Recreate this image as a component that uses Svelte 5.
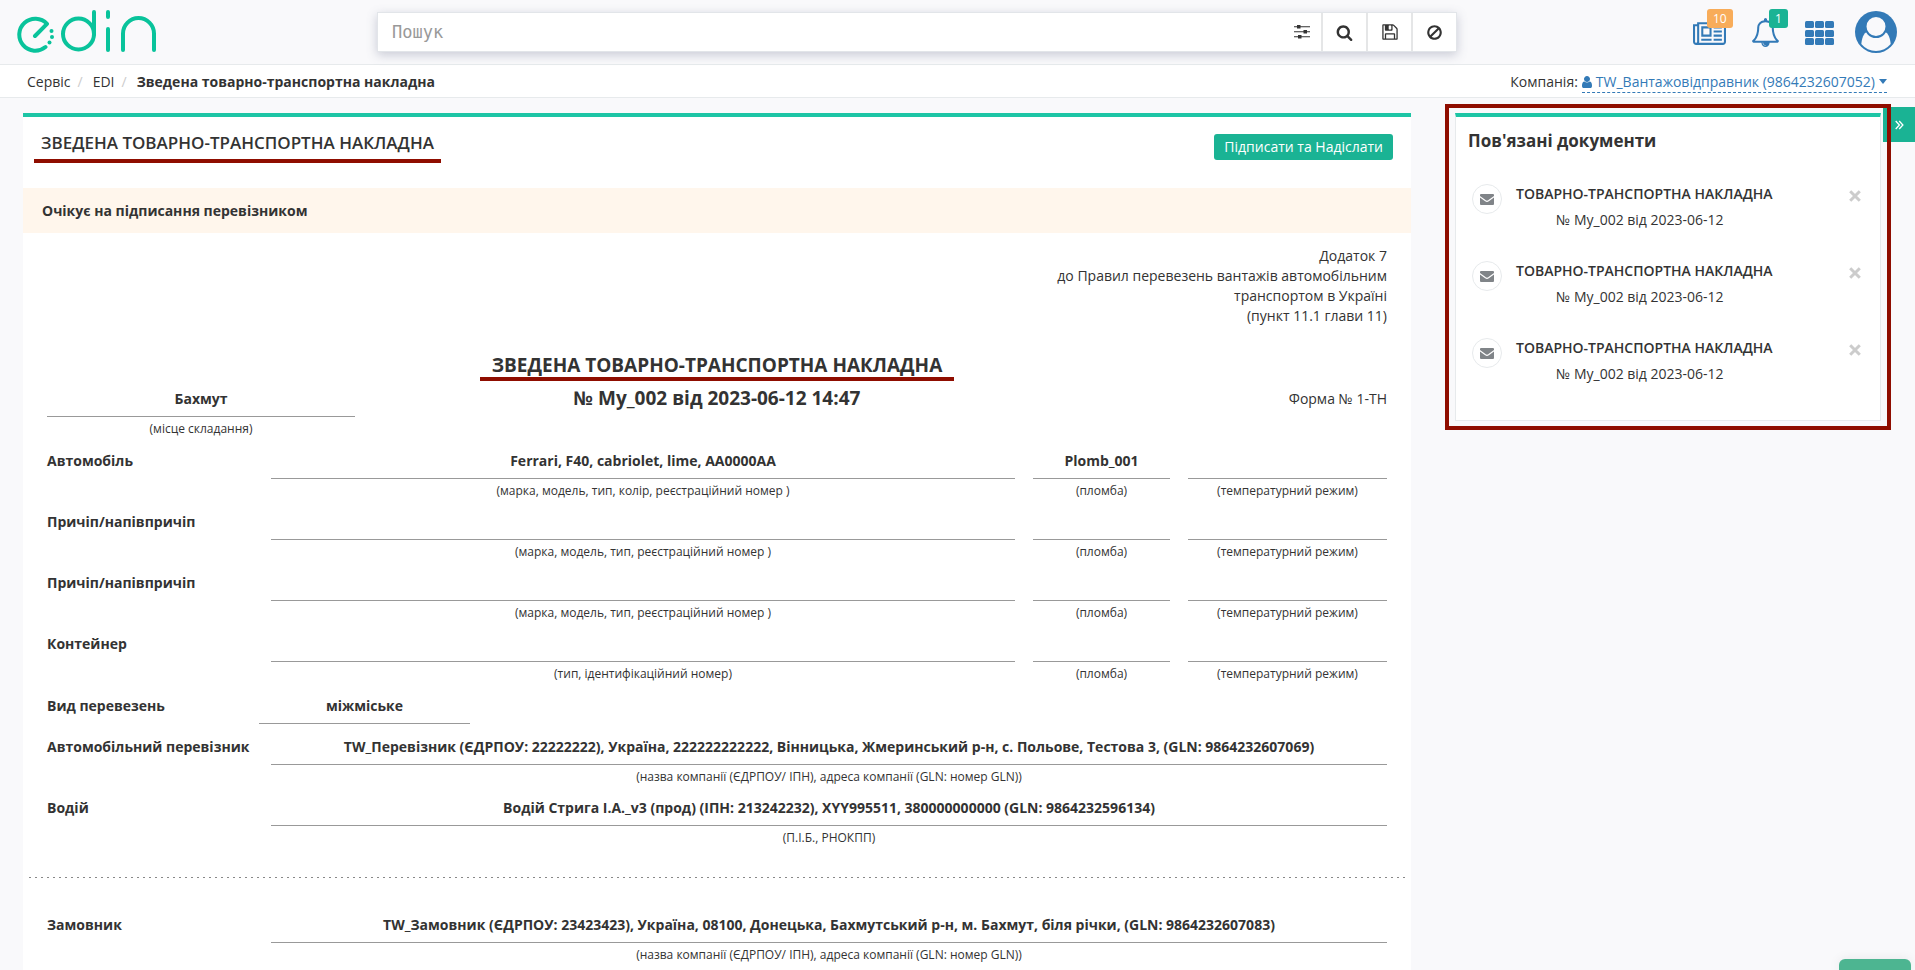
<script>
  const vehicles = [
    { label: 'Автомобіль', value: 'Ferrari, F40, cabriolet, lime, AA0000AA', hint: '(марка, модель, тип, колір, реєстраційний номер )', seal: 'Plomb_001' },
    { label: 'Причіп/напівпричіп', value: '', hint: '(марка, модель, тип, реєстраційний номер )', seal: '' },
    { label: 'Причіп/напівпричіп', value: '', hint: '(марка, модель, тип, реєстраційний номер )', seal: '' },
    { label: 'Контейнер', value: '', hint: '(тип, ідентифікаційний номер)', seal: '' }
  ];

  const companyHint = '(назва компанії (ЄДРПОУ/ ІПН), адреса компанії (GLN: номер GLN))';
  const carriers = [
    { label: 'Автомобільний перевізник', value: 'TW_Перевізник (ЄДРПОУ: 22222222), Україна, 222222222222, Вінницька, Жмеринський р-н, с. Польове, Тестова 3, (GLN: 9864232607069)', hint: companyHint },
    { label: 'Водій', value: 'Водій Стрига І.А._v3 (прод) (ІПН: 213242232), XYY995511, 380000000000 (GLN: 9864232596134)', hint: '(П.І.Б., РНОКПП)' }
  ];
  const customers = [
    { label: 'Замовник', value: 'TW_Замовник (ЄДРПОУ: 23423423), Україна, 08100, Донецька, Бахмутський р-н, м. Бахмут, біля річки, (GLN: 9864232607083)', hint: companyHint }
  ];

  const related = [1, 2, 3].map((id) => ({
    id,
    type: 'ТОВАРНО-ТРАНСПОРТНА НАКЛАДНА',
    name: '№ My_002 від 2023-06-12'
  }));
</script>

{#snippet field(value, hint)}
  <div class="field">
    <div class="value">{value}</div>
    {#if hint}<div class="hint">{hint}</div>{/if}
  </div>
{/snippet}

<div class="page">
  <header class="top">
    <a class="logo" href="#home" aria-label="edin">
      <svg width="144" height="46" viewBox="0 0 144 46" fill="none" stroke="#09c39b" stroke-width="4" stroke-linecap="round">
        <path d="M18 29 30 16.800A16 16 0 1 0 28.500 40" stroke-linejoin="round" />
        <g fill="#09c39b" stroke="none">
          <circle cx="34.500" cy="24" r="2" /><circle cx="35" cy="30" r="2" /><circle cx="32.500" cy="35.500" r="2" />
        </g>
        <circle cx="61.500" cy="27" r="15.500" />
        <path d="M77 5V27.500M91 5v5M91 22v21M106 43V26.500a15.500 15.500 0 0 1 31 0v16.500" />
      </svg>
    </a>

    <form class="search" role="search">
      <input type="text" placeholder="Пошук" aria-label="Пошук" />
      <button type="button" class="plain" aria-label="Фільтри">
        <svg width="16" height="14" viewBox="0 0 16 14" fill="#333"><path d="M0 1.300h16v1H0zM0 6.300h16v1H0zM0 11.300h16v1H0z" /><path d="M3 0h3.500v3.600H3zM9.500 5H13v3.600H9.500zM4 10h3.500v3.600H4z" /></svg>
      </button>
      <button type="button" aria-label="Шукати">
        <svg width="17" height="17" viewBox="0 0 1792 1792" fill="#333"><path d="M1216 832q0-185-131.500-316.500t-316.500-131.500-316.500 131.500-131.500 316.500 131.500 316.500 316.500 131.500 316.500-131.500 131.500-316.500zm512 832q0 52-38 90t-90 38q-54 0-90-38l-343-342q-179 124-399 124-143 0-273.500-55.500t-225-150-150-225-55.500-273.500 55.500-273.500 150-225 225-150 273.500-55.500 273.500 55.500 225 150 150 225 55.500 273.500q0 220-124 399l343 343q37 37 37 90z" /></svg>
      </button>
      <button type="button" aria-label="Зберегти">
        <svg width="18" height="18" viewBox="0 0 1792 1792" fill="#333"><path d="M512 1536h768v-384h-768v384zm896 0h128v-896q0-14-10-38.500t-20-34.500l-281-281q-10-10-34-20t-39-10v416q0 40-28 68t-68 28h-576q-40 0-68-28t-28-68v-416h-128v1280h128v-416q0-40 28-68t68-28h832q40 0 68 28t28 68v416zm-384-928v-320q0-13-9.500-22.500t-22.500-9.500h-192q-13 0-22.500 9.500t-9.500 22.500v320q0 13 9.500 22.500t22.500 9.500h192q13 0 22.500-9.500t9.500-22.500zm640 32v928q0 40-28 68t-68 28h-1344q-40 0-68-28t-28-68v-1344q0-40 28-68t68-28h928q40 0 88 20t76 48l280 280q28 28 48 76t20 88z" /></svg>
      </button>
      <button type="button" aria-label="Очистити">
        <svg width="17" height="17" viewBox="0 0 1792 1792" fill="#333"><path d="M1440 893q0-161-87-295l-754 753q137 89 297 89 111 0 211.500-43.500t173.500-116.500 116-174.500 43-212.500zm-999 299l755-754q-135-91-300-91-148 0-273 73t-198 199-73 274q0 162 89 299zm1223-299q0 157-61 300t-163.500 246-245 164-298.500 61-298.500-61-245-164-163.500-246-61-300 61-299.500 163.500-245.500 245-164 298.500-61 298.500 61 245 164 163.500 245.500 61 299.500z" /></svg>
      </button>
    </form>

    <nav class="tools">
      <a class="tool" href="#news" aria-label="Новини">
        <svg width="33" height="29" viewBox="0 0 2048 1792" fill="#337ab7"><path d="M1024 1024h-384v-384h384v384zm128 384v-128h-640v128h640zm0-384v-512h-640v640h640v-128zm640 384v-128h-512v128h512zm0-256v-128h-512v128h512zm0-256v-128h-512v128h512zm0-256v-128h-512v128h512zM256 1472v-960h-128v960q0 26 19 45t45 19 45-19 19-45zm1664 0v-1088h-1536v1088q0 33-11 64h1483q26 0 45-19t19-45zm128-1216v1216q0 80-56 136t-136 56h-1664q-80 0-136-56t-56-136v-1088h256v-128h1792z" fill-rule="evenodd" /></svg>
        <span class="badge orange">10</span>
      </a>
      <a class="tool" href="#alerts" aria-label="Сповіщення">
        <svg width="29" height="29" viewBox="0 0 1792 1792" fill="#337ab7"><path d="M912 1696q0-16-16-16-59 0-101.500-42.500t-42.500-101.500q0-16-16-16t-16 16q0 73 51.500 124.500t124.500 51.500q16 0 16-16zm-666-288h1300q-266-300-266-832 0-51-24-105t-69-103-121.500-80.500-169.500-31.500-169.500 31.500-121.500 80.500-69 103-24 105q0 532-266 832zm1482 0q0 52-38 90t-90 38h-448q0 106-75 181t-181 75-181-75-75-181h-448q-52 0-90-38t-38-90q50-42 91-88t85-119.500 74.500-158.500 50-206 19.500-260q0-152 117-282.500t307-158.500q-8-19-8-39 0-40 28-68t68-28 68 28 28 68q0 20-8 39 190 28 307 158.500t117 282.500q0 139 19.500 260t50 206 74.500 158.500 85 119.500 91 88z" /></svg>
        <span class="badge green">1</span>
      </a>
      <a class="tool" href="#apps" aria-label="Сервіси">
        <svg width="29" height="29" viewBox="0 0 29 29" fill="#337ab7">
          {#each [3, 12, 20] as y}{#each [0, 10, 20] as x}<rect {x} {y} width="9" height="7" rx="1.500" />{/each}{/each}
        </svg>
      </a>
      <a class="tool" href="#profile" aria-label="Профіль">
        <svg width="42" height="42" viewBox="0 0 42 42">
          <circle cx="21" cy="21" r="21" fill="#337ab7" />
          <path d="M6.300 33C7 25 10 20.500 14 20.500h14c4 0 7 4.500 7.700 12.500A19 19 0 0 1 6.300 33z" fill="#f9f9fb" />
          <circle cx="21" cy="15.500" r="10.500" fill="#f9f9fb" stroke="#337ab7" stroke-width="2" />
        </svg>
      </a>
    </nav>
  </header>

  <div class="subbar">
    <nav class="crumbs" aria-label="Навігація">
      <a href="#service">Сервіс</a><span class="sep">/</span><a href="#edi">EDI</a><span class="sep">/</span><strong>Зведена товарно-транспортна накладна</strong>
    </nav>
    <div class="company">
      <span>Компанія:</span>
      <a href="#company">
        <svg width="14" height="14" viewBox="256 0 1280 1792" fill="#337ab7"><path d="M1536 1399q0 109-62.500 187t-150.500 78h-854q-88 0-150.500-78t-62.500-187q0-85 8.500-160.500t31.500-152 58.500-131 94-89 134.500-34.500q131 128 313 128t313-128q76 0 134.500 34.500t94 89 58.500 131 31.500 152 8.500 160.500zm-256-887q0 159-112.500 271.500t-271.500 112.500-271.500-112.500-112.500-271.500 112.500-271.500 271.500-112.500 271.500 112.500 112.500 271.500z" /></svg>
        <span>TW_Вантажовідправник (9864232607052)</span>
        <i class="caret"></i>
      </a>
    </div>
  </div>

  <div class="body">
    <main class="card">
      <div class="card-head">
        <h1>ЗВЕДЕНА ТОВАРНО-ТРАНСПОРТНА НАКЛАДНА</h1>
        <button type="button" class="primary">Підписати та Надіслати</button>
      </div>
      <div class="status">Очікує на підписання перевізником</div>

      <div class="doc">
        <p class="annex">Додаток 7<br />до Правил перевезень вантажів автомобільним<br />транспортом в Україні<br />(пункт 11.1 глави 11)</p>

        <div class="doc-head">
          <div class="place">{@render field('Бахмут', '(місце складання)')}</div>
          <h2><span class="marked">ЗВЕДЕНА ТОВАРНО-ТРАНСПОРТНА НАКЛАДНА</span><span>№ My_002 від 2023-06-12 14:47</span></h2>
          <div class="form-no">Форма № 1-ТН</div>
        </div>

        {#each vehicles as v}
          <div class="row">
            <div class="label">{v.label}</div>
            {@render field(v.value, v.hint)}
            {@render field(v.seal, '(пломба)')}
            {@render field('', '(температурний режим)')}
          </div>
        {/each}
        <div class="row kind">
          <div class="label">Вид перевезень</div>
          {@render field('міжміське', '')}
        </div>
        {#each carriers as c}
          <div class="row wide">
            <div class="label">{c.label}</div>
            {@render field(c.value, c.hint)}
          </div>
        {/each}
        <div class="dots"></div>
        {#each customers as c}
          <div class="row wide">
            <div class="label">{c.label}</div>
            {@render field(c.value, c.hint)}
          </div>
        {/each}
      </div>
    </main>

    <aside class="frame">
      <section class="panel">
        <h3>Пов'язані документи</h3>
        <ul>
          {#each related as d (d.id)}
            <li>
              <span class="mail">
                <svg width="14" height="11" viewBox="0 0 14 11"><rect width="14" height="11" rx="1" fill="#808488" /><path d="M-.500 2.500 5.500 6.800q1.500 1 3 0L14.500 2.500" fill="none" stroke="#fff" stroke-width="1.200" /></svg>
              </span>
              <a href="#doc">
                <b>{d.type}</b>
                <span>{d.name}</span>
              </a>
              <button type="button" class="remove" aria-label="Видалити">
                <svg width="12" height="12" viewBox="0 0 12 12" stroke="#ccc" stroke-width="3"><path d="M1.200 1.200l9.600 9.600M10.800 1.200l-9.600 9.600" /></svg>
              </button>
            </li>
          {/each}
        </ul>
      </section>
    </aside>
    <button type="button" class="collapse" aria-label="Згорнути">
      <svg width="9" height="10" viewBox="0 0 9 10" fill="none" stroke="#fff" stroke-width="1.300"><path d="M.700 1l3.700 4-3.700 4M4.200 1l3.700 4-3.700 4" /></svg>
    </button>
  </div>

  <button type="button" class="chat" aria-label="Чат"></button>
</div>

<style>
  :global(body) {
    margin: 0;
    background: #f9f9fb;
  }
  .page {
    position: relative;
    height: 100vh;
    overflow: hidden;
    font-family: 'Open Sans', 'Noto Sans', sans-serif;
    font-size: 14px;
    line-height: 20px;
    color: #333;
  }
  .page * {
    box-sizing: border-box;
  }
  a {
    color: inherit;
    text-decoration: none;
  }
  button {
    font: inherit;
    border: 0;
    padding: 0;
    cursor: pointer;
  }
  svg {
    display: block;
    flex: none;
  }
  .top {
    display: grid;
    grid-template-columns: 360fr 1080fr 440fr;
    align-items: center;
    height: 65px;
    padding: 0 18px 0 17px;
    border-bottom: 1px solid #e7eaec;
  }
  .logo {
    justify-self: start;
    margin-top: -4px;
  }
  .search {
    display: flex;
    height: 40px;
    background: #fff;
    border: 1px solid #e2e5e9;
    box-shadow: 0 3px 10px rgba(90, 96, 130, 0.3);
  }
  .search input {
    flex: 1;
    min-width: 0;
    border: 0;
    padding: 0 14px;
    outline: none;
    background: none;
    font: 17px 'DejaVu Sans Mono', monospace;
    color: #333;
  }
  .search input::placeholder {
    color: #999;
    opacity: 1;
  }
  .search button {
    display: grid;
    place-items: center;
    width: 45px;
    background: #fff;
    border-left: 2px solid #e5e6e7;
  }
  .search button.plain {
    width: 38px;
    border: 0;
  }
  .tools {
    display: flex;
    justify-content: flex-end;
    align-items: center;
    gap: 25px;
  }
  .tool {
    position: relative;
  }
  .tool:last-child {
    margin-left: -4px;
  }
  .badge {
    position: absolute;
    top: -9px;
    left: 14px;
    height: 19px;
    padding: 0 6px;
    border-radius: 3px;
    color: #fff;
    font-size: 12px;
    line-height: 19px;
  }
  .orange {
    background: #f8ac59;
  }
  .green {
    left: 18px;
    background: #1ab394;
  }
  .subbar {
    display: flex;
    justify-content: space-between;
    align-items: center;
    height: 33px;
    padding: 2px 28px 0 27px;
    background: #fff;
    border-bottom: 1px solid #e7eaec;
  }
  .sep {
    padding: 0 10px 0 7px;
    color: #ccc;
  }
  .company,
  .company a {
    display: flex;
    align-items: center;
    gap: 4px;
  }
  .company a {
    color: #337ab7;
    border-bottom: 1px dashed #337ab7;
  }
  .company svg {
    width: 10px;
  }
  .caret {
    border: 4px solid transparent;
    border-top: 5px solid #337ab7;
    border-bottom: 0;
  }
  .body {
    position: relative;
    display: grid;
    grid-template-columns: 1388fr 446fr;
    gap: 34px;
    align-items: start;
    padding: 15px 24px 0 23px;
  }
  .card {
    background: #fff;
    border-top: 4px solid #1dc5a5;
  }
  .card-head {
    display: flex;
    justify-content: space-between;
    align-items: flex-start;
    height: 71px;
    padding: 14px 18px 0 11px;
  }
  h1,
  h2,
  h3 {
    margin: 0;
  }
  h1 {
    padding: 0 7px 4px;
    border-bottom: 4px solid #8f0d00;
    font-size: 17px;
    font-weight: 600;
    line-height: 24px;
  }
  .primary {
    height: 26px;
    margin-top: 3px;
    padding: 0 10px;
    border-radius: 3px;
    background: #1ab394;
    color: #fff;
  }
  .status {
    padding: 0 19px;
    background: #fff6ec;
    font-weight: 700;
    line-height: 45px;
  }
  .doc {
    padding: 13px 24px 0;
  }
  .annex {
    margin: 0;
    text-align: right;
  }
  .doc-head {
    display: grid;
    grid-template-columns: 308fr 724fr 308fr;
    align-items: start;
    margin: 27px 0 13px;
  }
  .place,
  .form-no {
    padding-top: 36px;
  }
  .form-no {
    text-align: right;
  }
  h2 {
    display: flex;
    flex-direction: column;
    align-items: center;
    gap: 5px;
    font-size: 19px;
    font-weight: 700;
    line-height: 24px;
  }
  .marked {
    padding: 0 12px;
    border-bottom: 4px solid #8f0d00;
  }
  .row {
    display: grid;
    grid-template-columns: 206fr 744fr 137fr 199fr;
    gap: 18px;
    padding-bottom: 12px;
  }
  .row.wide {
    grid-template-columns: 206fr 1116fr;
  }
  .row.kind {
    grid-template-columns: 194fr 211fr 899fr;
    padding: 1px 0 13px;
  }
  .label {
    font-weight: 700;
    white-space: nowrap;
  }
  .field {
    min-width: 0;
    text-align: center;
  }
  .value {
    height: 28px;
    border-bottom: 1px solid #999;
    font-weight: 700;
    white-space: nowrap;
  }
  .hint {
    margin-top: 3px;
    font-size: 12px;
    line-height: 18px;
  }
  .dots {
    height: 1px;
    margin: 18px -18px 37px;
    background: repeating-linear-gradient(90deg, #888 0 2px, transparent 2px 6px);
  }
  .frame {
    position: relative;
    z-index: 1;
    margin-top: -9px;
    padding: 5px 6px;
    border: 4px solid #8f0d00;
  }
  .panel {
    padding: 12px 12px 36px;
    background: #fff;
    border: 1px solid #e7eaec;
    border-top: 4px solid #1dc5a5;
  }
  h3 {
    font-size: 17px;
    font-weight: 700;
    line-height: 24px;
  }
  ul {
    display: grid;
    gap: 31px;
    margin: 31px 0 0;
    padding: 0;
    list-style: none;
  }
  li {
    display: flex;
    align-items: flex-start;
    padding: 0 7px 0 4px;
  }
  li a {
    flex: 1;
    display: grid;
    gap: 6px;
    margin-left: 14px;
  }
  li b {
    font-weight: 600;
  }
  li a span {
    padding-left: 40px;
  }
  .mail {
    display: grid;
    place-items: center;
    width: 30px;
    height: 30px;
    border: 1px solid #e7eaec;
    border-radius: 50%;
  }
  .remove {
    margin: 6px 0 0;
    background: none;
  }
  .collapse {
    position: absolute;
    top: 9px;
    right: 0;
    display: grid;
    place-items: center;
    width: 32px;
    height: 35px;
    background: #1ab394;
  }
  .chat {
    position: absolute;
    right: 4px;
    bottom: 0;
    width: 72px;
    height: 11px;
    border-radius: 6px 6px 0 0;
    background: #4db591;
    box-shadow: 0 0 12px rgba(0, 0, 0, 0.08);
  }
</style>
